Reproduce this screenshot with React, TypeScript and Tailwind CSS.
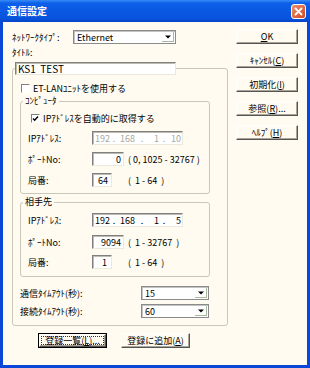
import React from "react";

type BoxProps = { className?: string; children?: React.ReactNode };

// classic raised push button
const Raised = ({ className = "", children }: BoxProps) => (
  <div
    className={
      "flex items-center justify-center bg-[#fffbf0] border border-t-white border-l-white border-r-[#555555] border-b-[#555555] shadow-[inset_-1px_-1px_0_#a9a597] " +
      className
    }
  >
    {children}
  </div>
);

// sunken edit field
const Field = ({ className = "", children }: BoxProps) => (
  <div
    className={
      "flex items-center bg-white border border-t-[#808080] border-l-[#808080] border-r-[#ebe8dc] border-b-[#ebe8dc] shadow-[inset_1px_1px_0_#bdbab0] " +
      className
    }
  >
    {children}
  </div>
);

const Combo = ({ value, className = "" }: { value: string; className?: string }) => (
  <div
    className={
      "flex items-center bg-white border border-[#8a8a8a] shadow-[inset_1px_1px_0_#c4c4c4] " + className
    }
  >
    <span className="flex-1 pl-[3px]">{value}</span>
    <div className="w-[12px] h-[10px] mr-[1px] flex items-center justify-center border-b border-r border-[#a8b8a0]">
      <svg width="6" height="4" viewBox="0 0 6 4">
        <path d="M0 0.5h6L3 3.5z" fill="#000" />
      </svg>
    </div>
  </div>
);

const Check = ({ checked }: { checked?: boolean }) => (
  <div className="w-[9px] h-[9px] bg-white border border-t-[#808080] border-l-[#808080] border-r-white border-b-white flex items-center justify-center">
    {checked && (
      <svg width="7" height="7" viewBox="0 0 7 7">
        <path d="M1 3.5l1.7 1.8L6 1.5" fill="none" stroke="#000" strokeWidth="1.4" />
      </svg>
    )}
  </div>
);

const IpField = ({ parts, disabled }: { parts: string[]; disabled?: boolean }) => (
  <Field className={"w-[91px] h-[14px] " + (disabled ? "text-[#a8a8a0]" : "text-black")}>
    <span className="w-[17px] text-right">{parts[0]}</span>
    <span className="w-[8px] text-center">.</span>
    <span className="w-[17px] text-right">{parts[1]}</span>
    <span className="w-[14px] text-center">.</span>
    <span className="w-[10px] text-right">{parts[2]}</span>
    <span className="w-[10px] text-center">.</span>
    <span className="w-[12px] text-right">{parts[3]}</span>
  </Field>
);

const Row = ({ children, className = "" }: BoxProps) => (
  <div className={"flex items-center h-[14px] " + className}>{children}</div>
);

const App = () => {
  return (
    <div className="w-[310px] h-[368px] flex flex-col bg-[#0b47d6] font-['Noto_Sans_CJK_JP',sans-serif] text-[9px] leading-none text-black">
      {/* Title bar */}
      <div className="h-[22px] flex items-center justify-between pl-[7px] pr-[4px] bg-[linear-gradient(to_bottom,#3a8cf7_0%,#0d5fe9_14%,#0a58e4_50%,#0853dc_85%,#0644c8_100%)]">
        <span className="text-white font-bold text-[10px] leading-none">通信設定</span>
        <div className="w-[15px] h-[15px] rounded-[3px] border border-white bg-[linear-gradient(135deg,#ec9070,#d2471f)] flex items-center justify-center">
          <svg width="9" height="9" viewBox="0 0 9 9">
            <path d="M1.5 1.5l6 6M7.5 1.5l-6 6" stroke="#fff" strokeWidth="1.8" strokeLinecap="round" />
          </svg>
        </div>
      </div>

      {/* Body */}
      <div className="mx-[3px] mb-[3px] flex-1 bg-[#fffbf0] flex pl-[9px]">
        {/* Left column */}
        <div className="w-[216px] flex flex-col pt-[8px]">
          <Row>
            <span className="w-[61px]">ﾈｯﾄﾜｰｸﾀｲﾌﾟ:</span>
            <Combo className="w-[103px] h-[14px]" value="Ethernet" />
          </Row>
          <div className="mt-[4px] h-[10px] leading-[10px]">ﾀｲﾄﾙ:</div>

          <fieldset className="mt-[4px] border border-[#c8c8b8] rounded-[3px] w-[216px]">
            <legend className="ml-[2px]">
              <Field className="w-[161px] h-[13px] text-[10px] pl-[2px] whitespace-pre">KS1  TEST</Field>
            </legend>
            <div className="px-[7px] pt-[9px] pb-[7px] flex flex-col">
              <div className="flex items-center h-[9px] ml-[1px]">
                <Check />
                <span className="ml-[3px]">ET-LANﾕﾆｯﾄを使用する</span>
              </div>

              {/* コンピュータ */}
              <fieldset className="mt-[3px] border border-[#c8c8b8] rounded-[3px] w-[190px]">
                <legend className="ml-[2px] px-[2px] leading-[10px]">ｺﾝﾋﾟｭｰﾀ</legend>
                <div className="pl-[7px] pt-[8px] pb-[6px] flex flex-col">
                  <div className="flex items-center h-[9px] ml-[3px]">
                    <Check checked />
                    <span className="ml-[3px]">IPｱﾄﾞﾚｽを自動的に取得する</span>
                  </div>
                  <Row className="mt-[8px]">
                    <span className="w-[64px]">IPｱﾄﾞﾚｽ:</span>
                    <IpField parts={["192", "168", "1", "10"]} disabled />
                  </Row>
                  <Row className="mt-[7px]">
                    <span className="w-[64px]">ﾎﾟｰﾄNo:</span>
                    <Field className="w-[32px] h-[14px] justify-end pr-[2px]">0</Field>
                    <span className="ml-[4px] whitespace-pre">( 0, 1025 - 32767 )</span>
                  </Row>
                  <Row className="mt-[7px]">
                    <span className="w-[64px]">局番:</span>
                    <Field className="w-[20px] h-[14px] justify-end pr-[3px]">64</Field>
                    <span className="ml-[16px] whitespace-pre">(  1 - 64  )</span>
                  </Row>
                </div>
              </fieldset>

              {/* 相手先 */}
              <fieldset className="mt-[3px] border border-[#c8c8b8] rounded-[3px] w-[190px]">
                <legend className="ml-[2px] px-[2px] leading-[10px]">相手先</legend>
                <div className="pl-[7px] pt-[6px] pb-[7px] flex flex-col">
                  <Row>
                    <span className="w-[64px]">IPｱﾄﾞﾚｽ:</span>
                    <IpField parts={["192", "168", "1", "5"]} />
                  </Row>
                  <Row className="mt-[8px]">
                    <span className="w-[64px]">ﾎﾟｰﾄNo:</span>
                    <Field className="w-[32px] h-[14px] justify-end pr-[2px]">9094</Field>
                    <span className="ml-[4px] whitespace-pre">(  1 - 32767  )</span>
                  </Row>
                  <Row className="mt-[6px]">
                    <span className="w-[64px]">局番:</span>
                    <Field className="w-[20px] h-[14px] justify-end pr-[4px]">1</Field>
                    <span className="ml-[16px] whitespace-pre">(  1 - 64  )</span>
                  </Row>
                </div>
              </fieldset>

              <Row className="mt-[9px]">
                <span className="w-[121px]">通信ﾀｲﾑｱｳﾄ(秒):</span>
                <Combo className="w-[68px] h-[14px]" value="15" />
              </Row>
              <Row className="mt-[4px]">
                <span className="w-[121px]">接続ﾀｲﾑｱｳﾄ(秒):</span>
                <Combo className="w-[68px] h-[14px]" value="60" />
              </Row>
            </div>
          </fieldset>

          {/* bottom buttons */}
          <div className="flex mt-[7px] ml-[26px] gap-[14px]">
            <div className="w-[69px] h-[15px] border border-black flex">
              <Raised className="flex-1">
                <div className="self-stretch flex-1 m-[1px] border border-dotted border-[#333] flex items-center justify-center">
                  登録一覧(<u>L</u>)...
                </div>
              </Raised>
            </div>
            <Raised className="w-[69px] h-[15px]">
              登録に追加(<u>A</u>)
            </Raised>
          </div>
        </div>

        {/* Right column */}
        <div className="ml-[8px] pt-[7px] flex flex-col gap-[9px]">
          <Raised className="w-[62px] h-[15px]">
            <span>
              <u>O</u>K
            </span>
          </Raised>
          <Raised className="w-[62px] h-[15px]">
            ｷｬﾝｾﾙ(<u>C</u>)
          </Raised>
          <Raised className="w-[62px] h-[15px]">
            初期化(<u>I</u>)
          </Raised>
          <Raised className="w-[62px] h-[15px]">
            参照(<u>R</u>)...
          </Raised>
          <Raised className="w-[62px] h-[15px]">
            ﾍﾙﾌﾟ(<u>H</u>)
          </Raised>
        </div>
      </div>
    </div>
  );
};

export default App;
